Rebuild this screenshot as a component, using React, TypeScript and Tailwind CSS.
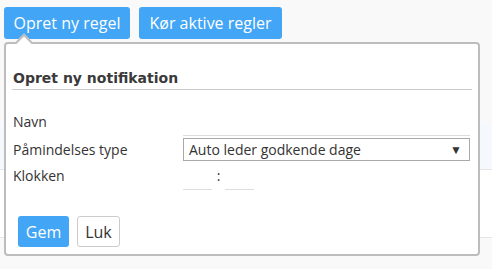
export default function App() {
  return (
    <div className="relative h-[269px] w-[492px] overflow-hidden bg-[#f9f9f9] font-['Open_Sans',sans-serif] text-[#333]">
      <div className="flex gap-[9px] pl-[4px] pt-[7px]">
        <button className="h-[32px] w-[126px] rounded-[3px] bg-[#42a5f5] text-[16px] text-white">Opret ny regel</button>
        <button className="h-[32px] w-[143px] rounded-[3px] bg-[#42a5f5] text-[16px] text-white">Kør aktive regler</button>
      </div>

      {/* table behind the popover */}
      <div className="mt-[84px] flex flex-col">
        <div className="h-[47px] border-b border-[#e6e6e6] bg-[#f5f8fd]" />
        <div className="h-[68px] border-b border-[#e6e6e6] bg-white" />
      </div>

      {/* popover */}
      <div className="absolute left-[4px] top-[42px] h-[214px] w-[476px] rounded-[4px] border-2 border-[#bdbdbd] bg-white">
        <div className="absolute -top-[8px] left-[12px] h-[12px] w-[12px] rotate-45 border-l-2 border-t-2 border-[#bdbdbd] bg-white" />
        <div className="relative px-[6px] pt-[25px]">
          <div className="border-b border-[#cccccc] pb-[2px] pl-[1px] font-['DejaVu_Sans',sans-serif] text-[14px] font-bold leading-[18px] text-[#3a3a3a]">
            Opret ny notifikation
          </div>
          <div className="mt-[22px] flex flex-col pl-[1px] text-[14px]">
            <div className="flex items-start">
              <span className="w-[170px] leading-[20px]">Navn</span>
              <div className="mt-[5px] h-[19px] w-[287px] border-b border-[#dddddd]" />
            </div>
            <div className="mt-[2px] flex items-center">
              <span className="w-[170px] leading-[20px]">Påmindelses type</span>
              <div className="flex h-[23px] w-[287px] items-center justify-between border border-[#a9a9a9] pl-[5px] pr-[7px]">
                <span>Auto leder godkende dage</span>
                <span className="text-[12px] text-[#333]">▼</span>
              </div>
            </div>
            <div className="mt-[2px] flex items-start">
              <span className="w-[170px] pt-[3px] leading-[20px]">Klokken</span>
              <div className="flex items-start">
                <div className="h-[27px] w-[29px] border-b border-[#dddddd]" />
                <span className="w-[13px] pt-[3px] text-center leading-[20px]">:</span>
                <div className="h-[27px] w-[29px] border-b border-[#dddddd]" />
              </div>
            </div>
          </div>
          <div className="mt-[26px] flex gap-[8px] pl-[6px]">
            <button className="h-[31px] w-[51px] rounded-[3px] bg-[#42a5f5] text-[16px] text-white">Gem</button>
            <button className="h-[31px] w-[43px] rounded-[3px] border border-[#cccccc] bg-white text-[16px] text-[#333]">Luk</button>
          </div>
        </div>
      </div>
    </div>
  );
}
